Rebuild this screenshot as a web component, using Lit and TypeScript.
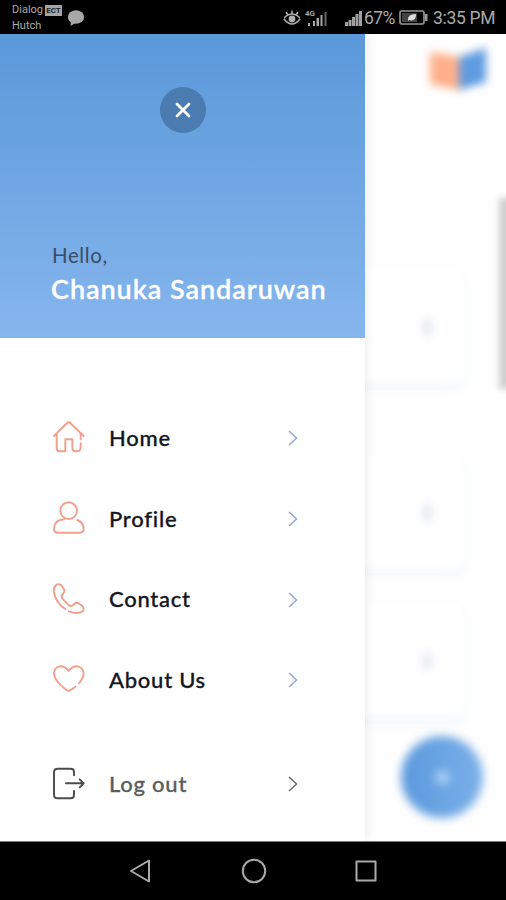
import { LitElement, html, css, svg } from 'lit';
import { customElement, property } from 'lit/decorators.js';

const ICONS: Record<string, any> = {
    home: svg`
        <path d="M42 78 L81 39 Q86 34 91 39 L131 78 M50 72 V114 Q50 124 60 124 H76 V88 H97 V114 Q97 124 107 124 H112 Q122 123 122 112 V100 M122 71 V88"/>`,
    profile: svg`
        <circle cx="86" cy="301" r="25"/>
        <path d="M72 327 Q42 329 42 355 Q42 367 54 367 H119 Q132 367 131 354 Q130 336 112 329"/>`,
    contact: svg`
        <path d="M76 115 Q50 99 43 70 Q38 50 50 42 Q60 38 66 46 L73 58 Q75 64 69 69 Q62 75 67 84 L87 104 Q94 109 101 102 Q107 94 114 97 L126 105 Q135 113 128 122 Q115 132 86 122"/>`,
    about: svg`
        <path d="M106 350 Q91 362 86 362 Q80 362 64 347 Q42 327 42 309 Q43 292 59 289 Q75 288 86 303 Q97 288 113 289 Q130 293 131 310 Q130 324 117 340"/>`,
    logout: svg`
        <path d="M102 76 V66 Q102 56 92 56 H53 Q42 56 42 67 V134 Q42 145 53 145 H92 Q102 145 102 135 V123 M78 100 H131 M119 88 L131 100 L119 112"/>`,
};

const VIEWS: Record<string, string> = {
    home: '36 33 102 102',
    profile: '36 275 102 102',
    contact: '36 37 102 102',
    about: '36 279 102 102',
    logout: '36 51 102 102',
};

@customElement('menu-row')
export class MenuRow extends LitElement {
    @property() icon = 'home';
    @property() label = '';

    static styles = css`
        :host {
            display: flex;
            align-items: center;
            height: 80.7px;
            padding: 0 67px 0 52px;
            color: #15161f;
            --icon: #f0a08c;
            --arrow: #98a9c6;
        }

        :host([icon="logout"]) {
            color: #5c5c60;
            --icon: #4c4c50;
            --arrow: #707074;
        }

        .icon {
            width: 34px;
            height: 34px;
            overflow: visible;
            fill: none;
            stroke: var(--icon);
            stroke-width: 5.8;
            stroke-linecap: round;
            stroke-linejoin: round;
        }

        .label {
            flex: 1;
            margin-left: 23px;
            padding-bottom: 2px;
            font-size: 22px;
            font-weight: 500;
            letter-spacing: 0.75px;
            white-space: nowrap;
            -webkit-text-stroke: 0.3px currentColor;
        }

        .arrow {
            width: 10px;
            height: 16px;
            fill: none;
            stroke: var(--arrow);
            stroke-width: 1.6;
        }
    `;

    render() {
        return html`
        <svg class="icon" viewBox="${VIEWS[this.icon]}">${ICONS[this.icon]}</svg>
        <span class="label">${this.label}</span>
        <svg class="arrow" viewBox="0 0 10 16"><path d="M1 1 L8.5 8 L1 15"/></svg>
        `;
    }
}

@customElement('status-bar')
export class StatusBar extends LitElement {
    static styles = css`
        :host {
            display: flex;
            align-items: center;
            height: 34px;
            box-sizing: border-box;
            padding: 2px 11px 0 12px;
            background: #000;
            color: #aaa;
            font-family: Roboto, sans-serif;
        }

        .carriers {
            font-size: 11px;
            line-height: 16px;
            width: 52px;
        }

        .carrier {
            display: flex;
            align-items: center;
            gap: 2px;
        }

        .badge {
            background: #a5a5a5;
            color: #222;
            font-size: 8px;
            font-weight: bold;
            line-height: 11px;
            width: 17px;
            text-align: center;
        }

        .bubble {
            margin-left: 3px;
        }

        .right {
            display: flex;
            align-items: center;
            margin-left: auto;
        }

        .percent {
            font-size: 17.5px;
            margin-left: 2px;
            width: 33px;
            letter-spacing: -0.6px;
        }

        .battery {
            margin-left: 2px;
        }

        .clock {
            font-size: 17.5px;
            margin-left: 5px;
            width: 62px;
            letter-spacing: -0.3px;
            white-space: nowrap;
        }
    `;

    render() {
        return html`
        <div class="carriers">
            <div class="carrier">Dialog <span class="badge">ECT</span></div>
            <div class="carrier">Hutch</div>
        </div>
        <svg class="bubble" width="18" height="18" viewBox="0 0 18 18" fill="#a8a8a8">
            <ellipse cx="9" cy="8" rx="8.2" ry="6.8"/>
            <path d="M4 11 L3.5 17 L10 13Z"/>
        </svg>
        <div class="right">
            <svg width="18" height="16" viewBox="0 0 18 16" fill="none" stroke="#b0b0b0" stroke-width="1.6">
                <path d="M1 8 Q9 0 17 8 M1 9 Q9 19 17 9 M9 0.500 V4 M3 2 L5 5 M15 2 L13 5"/>
                <circle cx="9" cy="9" r="2.6" fill="#b0b0b0"/>
            </svg>
            <svg width="31" height="18" viewBox="0 0 31 18" fill="#a5a5a5">
                <text x="4" y="7" font-size="8" font-weight="bold">4G</text>
                <path d="M7 14h2v3H7z M12 12h2v5h-2z M15.500 9H18v8h-2.500z M19.500 6h2v11h-2z"/>
                <path d="M23.500 3h2v14h-2z" fill="#666"/>
            </svg>
            <svg width="30" height="18" viewBox="2 0 30 18" fill="#a0a0a0">
                <path d="M15 13h3v4h-3z M18.500 11h3v6h-3z M22 8h3v9h-3z M25.500 5h3v12h-3z M29 2h3v15h-3z"/>
            </svg>
            <span class="percent">67%</span>
            <svg class="battery" width="29" height="16" viewBox="0 0 29 16">
                <rect x="1" y="1" width="24" height="13" rx="1.500" fill="none" stroke="#999" stroke-width="1.600"/>
                <rect x="3" y="3" width="15" height="9" fill="#444"/>
                <rect x="26" y="4" width="2.500" height="7" fill="#999"/>
                <path d="M9 11 Q8 4 17 4 Q17 12 10 10Z" fill="#ddd"/>
            </svg>
            <span class="clock">3:35 PM</span>
        </div>
        `;
    }
}

@customElement('app-root')
export class AppRoot extends LitElement {
    static styles = css`
        :host {
            display: flex;
            flex-direction: column;
            width: 506px;
            height: 900px;
            overflow: hidden;
            background: #fff;
            font-family: Lato, "Liberation Sans", sans-serif;
        }

        .screen {
            display: grid;
            height: 807px;
            overflow: hidden;
        }

        .page,
        .drawer {
            grid-area: 1 / 1;
        }

        .page {
            position: relative;
            background: #fefefe;
        }

        .topbar {
            display: flex;
            justify-content: flex-end;
            box-sizing: border-box;
            height: 98px;
            padding: 13px 18px 0 0;
        }

        .logo {
            width: 60px;
            height: 44px;
            overflow: visible;
            filter: blur(4.5px);
        }

        .cards {
            display: flex;
            flex-direction: column;
            padding: 138px 43px 0 300px;
            filter: blur(5px);
        }

        .card {
            display: flex;
            align-items: center;
            justify-content: flex-end;
            box-sizing: border-box;
            height: 114px;
            margin-bottom: 72px;
            padding-right: 31px;
            background: #fff;
            border-radius: 8px;
            box-shadow: 0 3px 5px #e6edf7;
        }

        .card.last {
            margin-top: -38px;
        }

        .dot {
            width: 9px;
            height: 16px;
            background: #e2e7ee;
        }

        .scroll {
            position: absolute;
            right: -8px;
            top: 164px;
            width: 15px;
            height: 191px;
            background: #d0d0d0;
            filter: blur(3px);
        }

        .fab {
            position: absolute;
            left: 401px;
            top: 702px;
            width: 82px;
            height: 82px;
            display: grid;
            place-items: center;
            border-radius: 50%;
            background: linear-gradient(90deg, #5a99dd, #7bb0e9);
            filter: blur(5px);
        }

        .plus {
            width: 15px;
            height: 15px;
            border-radius: 50%;
            background: #a8cdf1;
        }

        .drawer {
            z-index: 1;
            width: 365px;
            background: #fff;
            box-shadow: 2px 0 9px rgba(0, 0, 0, 0.07);
        }

        .header {
            display: flex;
            flex-direction: column;
            box-sizing: border-box;
            height: 304px;
            padding: 53px 0 0 52px;
            background: linear-gradient(#5a98d9, #86b6ee);
        }

        .close {
            width: 46px;
            height: 46px;
            margin-left: 108px;
            border: none;
            border-radius: 50%;
            padding: 0;
            background: #4a7bb1;
        }

        .close svg {
            display: block;
        }

        .hello {
            margin-top: 109px;
            font-size: 20.5px;
            line-height: 26px;
            letter-spacing: 0.6px;
            color: #3d4c62;
        }

        .name {
            margin-top: 4px;
            margin-left: -1px;
            font-size: 27px;
            line-height: 34px;
            font-weight: 600;
            letter-spacing: 0.95px;
            color: #fff;
            white-space: nowrap;
            -webkit-text-stroke: 0.3px #fff;
        }

        .menu {
            padding-top: 60px;
        }

        .menu .leave {
            margin-top: 23px;
        }

        .nav {
            display: flex;
            align-items: center;
            justify-content: space-between;
            box-sizing: border-box;
            height: 59px;
            padding: 0 127px 0 128px;
            border-top: 1px solid #777;
            background: #000;
        }

        .nav svg {
            width: 26px;
            height: 26px;
            fill: none;
            stroke: #aaa;
            stroke-width: 2;
            stroke-linejoin: round;
        }
    `;

    render() {
        return html`
        <status-bar></status-bar>

        <div class="screen">
            <div class="page">
                <div class="topbar">
                    <svg class="logo" viewBox="0 0 60 44">
                        <path d="M2 5 L31 10 V43 L2 37Z" fill="#ffb08a"/>
                        <path d="M31 10 L58 1 V35 L31 43Z" fill="#5f9be0"/>
                    </svg>
                </div>
                <div class="cards">
                    <div class="card"><span class="dot"></span></div>
                    <div class="card"><span class="dot"></span></div>
                    <div class="card last"><span class="dot"></span></div>
                </div>
                <div class="scroll"></div>
                <div class="fab"><span class="plus"></span></div>
            </div>

            <div class="drawer">
                <div class="header">
                    <button class="close" aria-label="Close">
                        <svg width="46" height="46" viewBox="0 0 46 46" stroke="#fff" stroke-width="2.8" stroke-linecap="round">
                            <path d="M17 17 L29 29 M29 17 L17 29"/>
                        </svg>
                    </button>
                    <div class="hello">Hello,</div>
                    <div class="name">Chanuka Sandaruwan</div>
                </div>
                <div class="menu">
                    <menu-row icon="home" label="Home"></menu-row>
                    <menu-row icon="profile" label="Profile"></menu-row>
                    <menu-row icon="contact" label="Contact"></menu-row>
                    <menu-row icon="about" label="About Us"></menu-row>
                    <menu-row class="leave" icon="logout" label="Log out"></menu-row>
                </div>
            </div>
        </div>

        <div class="nav">
            <svg viewBox="0 0 26 26"><path d="M3 13 L21 2.500 V23.500Z"/></svg>
            <svg viewBox="0 0 26 26"><circle cx="13" cy="13" r="11.200"/></svg>
            <svg viewBox="0 0 26 26"><rect x="3.500" y="3.500" width="19" height="19"/></svg>
        </div>
        `;
    }
}
